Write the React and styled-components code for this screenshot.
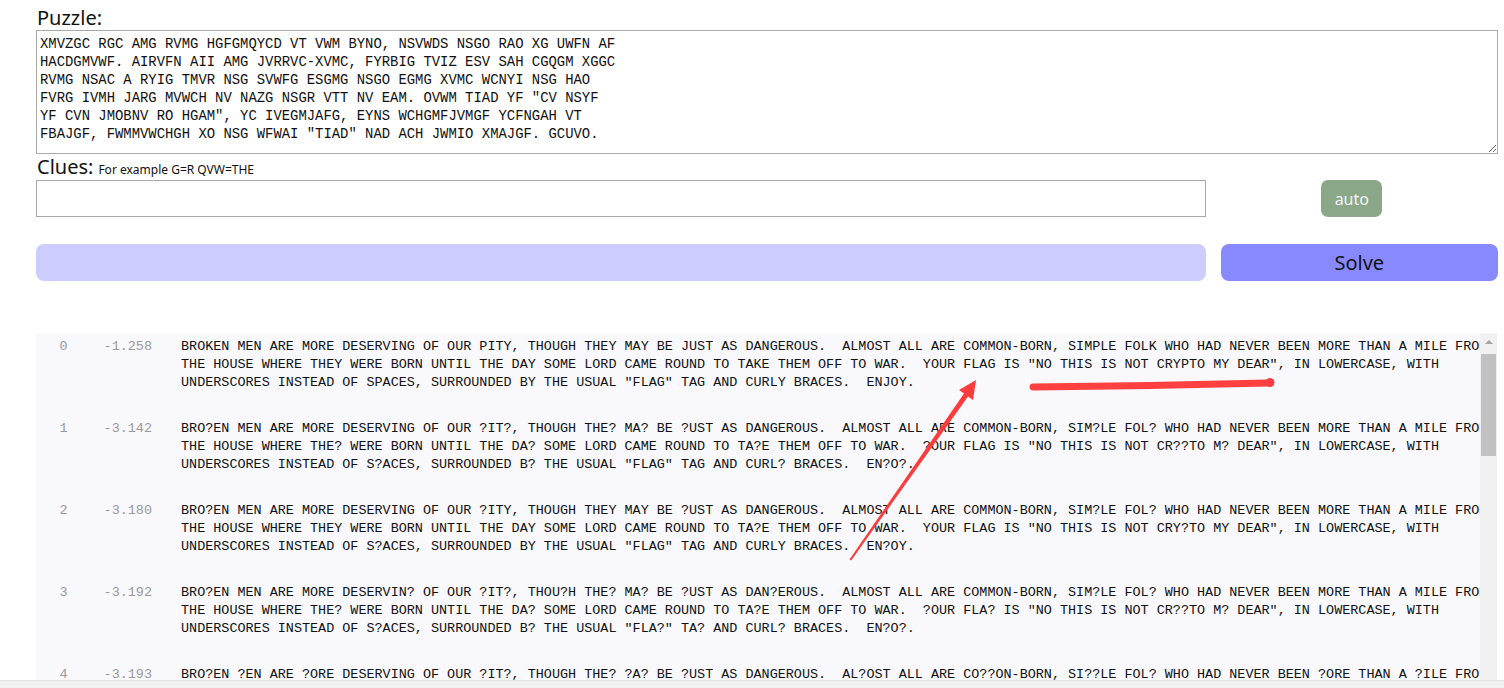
import React from "react";
import styled, { createGlobalStyle } from "styled-components";

const MONO = "'Liberation Mono', 'DejaVu Sans Mono', monospace";

const GlobalStyle = createGlobalStyle`
  html, body {
    margin: 0;
    padding: 0;
    background: #fff;
  }
  body {
    font-family: "Noto Sans", "Open Sans", sans-serif;
    overflow: hidden;
  }
`;

const PUZZLE = `XMVZGC RGC AMG RVMG HGFGMQYCD VT VWM BYNO, NSVWDS NSGO RAO XG UWFN AF
HACDGMVWF. AIRVFN AII AMG JVRRVC-XVMC, FYRBIG TVIZ ESV SAH CGQGM XGGC
RVMG NSAC A RYIG TMVR NSG SVWFG ESGMG NSGO EGMG XVMC WCNYI NSG HAO
FVRG IVMH JARG MVWCH NV NAZG NSGR VTT NV EAM. OVWM TIAD YF "CV NSYF
YF CVN JMOBNV RO HGAM", YC IVEGMJAFG, EYNS WCHGMFJVMGF YCFNGAH VT
FBAJGF, FWMMVWCHGH XO NSG WFWAI "TIAD" NAD ACH JWMIO XMAJGF. GCUVO.`;

const PLAIN = [
  "BROKEN MEN ARE MORE DESERVING OF OUR PITY, THOUGH THEY MAY BE JUST AS DANGEROUS.  ALMOST ALL ARE COMMON-BORN, SIMPLE FOLK WHO HAD NEVER BEEN MORE THAN A MILE FROM",
  'THE HOUSE WHERE THEY WERE BORN UNTIL THE DAY SOME LORD CAME ROUND TO TAKE THEM OFF TO WAR.  YOUR FLAG IS "NO THIS IS NOT CRYPTO MY DEAR", IN LOWERCASE, WITH',
  'UNDERSCORES INSTEAD OF SPACES, SURROUNDED BY THE USUAL "FLAG" TAG AND CURLY BRACES.  ENJOY.',
];

const results = [
  { score: "-1.258", unknown: "" },
  { score: "-3.142", unknown: "KPYJ" },
  { score: "-3.180", unknown: "KPJ" },
  { score: "-3.192", unknown: "KPYJG" },
  { score: "-3.193", unknown: "KMYPJ" },
];

const mask = (line, unknown) =>
  line.replace(/[A-Z]/g, (c) => (unknown.includes(c) ? "?" : c));

const Page = styled.div`
  position: relative;
  height: 688px;
  display: flex;
  flex-direction: column;
  overflow: hidden;
`;

const Main = styled.main`
  flex: 1;
  min-height: 0;
  display: flex;
  flex-direction: column;
  padding: 5px 6px 0 36px;
`;

const Label = styled.div`
  display: flex;
  align-items: baseline;
  gap: 5px;
  height: ${(p) => p.$h || 25}px;
  padding-left: 1px;
  font-size: 20px;
  line-height: ${(p) => p.$h || 25}px;
  color: #111;
`;

const Hint = styled.span`
  font-size: 12px;
`;

const PuzzleBox = styled.textarea`
  box-sizing: border-box;
  display: block;
  width: 100%;
  height: 124px;
  margin: 0;
  padding: 4px 3px;
  border: 1px solid #a9a9a9;
  background: #fff;
  color: #111;
  font-family: ${MONO};
  font-size: 13.9px;
  line-height: 18px;
  white-space: pre;
  overflow: hidden;
  resize: vertical;
  outline: none;
`;

const ClueRow = styled.div`
  display: flex;
  align-items: center;
  height: 37px;
`;

const ClueInput = styled.input`
  box-sizing: border-box;
  width: 80%;
  height: 37px;
  margin: 0;
  border: 1px solid #a9a9a9;
  background: #fff;
  outline: none;
`;

const AutoCell = styled.div`
  flex: 1;
  display: flex;
  justify-content: center;
`;

const AutoButton = styled.button`
  width: 61px;
  height: 37px;
  border: none;
  border-radius: 7px;
  background: #8aa888;
  color: #f4f4f8;
  font-family: "Noto Sans", "Open Sans", sans-serif;
  font-size: 16px;
  padding: 0;
`;

const BarRow = styled.div`
  display: flex;
  gap: 15px;
  height: 37px;
  margin-top: 27px;
`;

const Progress = styled.div`
  width: 80%;
  border-radius: 8px;
  background: #ccccff;
`;

const SolveButton = styled.button`
  flex: 1;
  border: none;
  border-radius: 8px;
  background: #8888ff;
  color: #111;
  font-family: "Noto Sans", "Open Sans", sans-serif;
  font-size: 20px;
  padding: 0;
`;

const Results = styled.section`
  flex: 1;
  min-height: 0;
  display: flex;
  margin-top: 52px;
  margin-right: 1px;
  background: #f8f8fd;
`;

const List = styled.div`
  flex: 1;
  min-width: 0;
  overflow: hidden;
  padding-top: 5px;
`;

const ResultRow = styled.div`
  display: grid;
  grid-template-columns: 55px 61px 1fr;
  padding-bottom: 28px;
  font-family: ${MONO};
  font-size: 13.45px;
  line-height: 18px;
`;

const Index = styled.div`
  text-align: center;
  color: #9a9a9a;
`;

const Score = styled.div`
  text-align: right;
  color: #9a9a9a;
`;

const Text = styled.div`
  min-width: 0;
  padding-left: 29px;
  color: #111;
  white-space: pre;
`;

const Track = styled.div`
  width: 17px;
  background: #f1f1f1;
  display: flex;
  flex-direction: column;
  align-items: center;
`;

const UpArrow = styled.div`
  margin-top: 7px;
  width: 0;
  height: 0;
  border-left: 4px solid transparent;
  border-right: 4px solid transparent;
  border-bottom: 4px solid #a3a3a3;
`;

const Thumb = styled.div`
  margin-top: 10px;
  width: 15px;
  height: 102px;
  background: #c1c1c1;
`;

const HScroll = styled.div`
  height: 7px;
  background: #f1f1f1;
  border-top: 1px solid #e4e4e4;
`;

const Overlay = styled.svg`
  position: absolute;
  left: 0;
  top: 0;
  pointer-events: none;
`;

export default function App() {
  return (
    <Page>
      <GlobalStyle />
      <Main>
        <Label>Puzzle:</Label>
        <PuzzleBox defaultValue={PUZZLE} spellCheck={false} />
        <Label $h={26}>
          Clues:<Hint>For example G=R QVW=THE</Hint>
        </Label>
        <ClueRow>
          <ClueInput />
          <AutoCell>
            <AutoButton>auto</AutoButton>
          </AutoCell>
        </ClueRow>
        <BarRow>
          <Progress />
          <SolveButton>Solve</SolveButton>
        </BarRow>
        <Results>
          <List>
            {results.map((r, i) => (
              <ResultRow key={i}>
                <Index>{i}</Index>
                <Score>{r.score}</Score>
                <Text>
                  {PLAIN.map((l) => mask(l, r.unknown)).join("\n")}
                </Text>
              </ResultRow>
            ))}
          </List>
          <Track>
            <UpArrow />
            <Thumb />
          </Track>
        </Results>
      </Main>
      <HScroll />
      <Overlay width="1504" height="688" viewBox="0 0 1504 688">
        <polygon
          points="849.5,559.5 964,393.5 959,390 976,380 973,400 968,396.5 851.2,560.5"
          fill="#ff3b3b"
        />
        <path
          d="M1033 387 L1150 385.5 L1268 383"
          stroke="#ff4040"
          strokeWidth="7"
          strokeLinecap="round"
          fill="none"
        />
        <circle cx="1270" cy="382.5" r="4.5" fill="#ff4040" />
      </Overlay>
    </Page>
  );
}
